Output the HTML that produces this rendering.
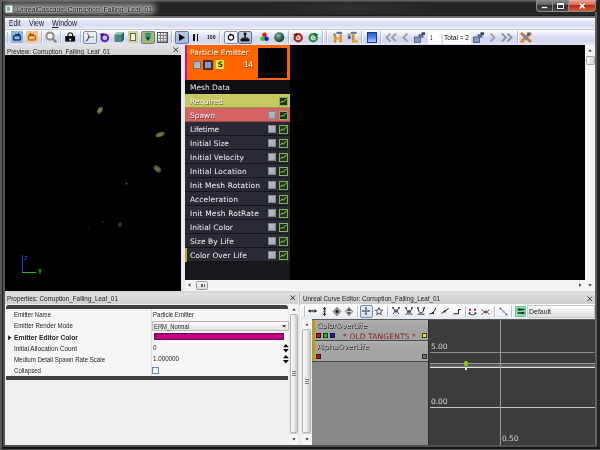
<!DOCTYPE html>
<html>
<head>
<meta charset="utf-8">
<title>UnrealCascade: Corruption_Falling_Leaf_01</title>
<style>
html,body{margin:0;padding:0;background:#2b2b2b;}
body{width:600px;height:450px;overflow:hidden;background:#2b2b2b;position:relative;font-family:"Liberation Sans",sans-serif;font-size:7px;color:#111;}
.a{position:absolute;box-sizing:border-box;}
.t{position:absolute;white-space:nowrap;line-height:1;transform-origin:0 0;}
svg{position:absolute;overflow:visible;}
</style>
</head>
<body>
<div id="app" style="position:absolute;left:0;top:0;width:600px;height:450px;filter:blur(0.35px);">
<div class="a" style="left:0px;top:0px;width:600px;height:450px;background:#222;"></div>
<div class="a" style="left:0px;top:0px;width:600px;height:17.8px;background:linear-gradient(#606060 0,#5a5a5a 7%,#262626 12%,#222222 50%,#282828 84%,#181818 87%,#707070 89%,#707070 100%);"></div>
<div class="a" style="left:2px;top:3px;width:154px;height:11px;background:rgba(200,200,200,.62);filter:blur(3px);border-radius:6px;"></div>
<div class="a" style="left:250px;top:1px;width:200px;height:14px;background:radial-gradient(ellipse at center,rgba(255,255,255,.07),rgba(255,255,255,0) 70%);"></div>
<div class="a" style="left:0px;top:0px;width:1.5px;height:450px;background:#595959;"></div>
<div class="a" style="left:1.5px;top:2px;width:1.6px;height:446px;background:#1e1e1e;"></div>
<div class="a" style="left:3.1px;top:15px;width:2.2px;height:432px;background:#545454;"></div>
<div class="a" style="left:595px;top:12px;width:2.2px;height:435px;background:#606060;"></div>
<div class="a" style="left:597.2px;top:0px;width:2.8px;height:450px;background:#242424;"></div>
<div class="a" style="left:3px;top:444.6px;width:594px;height:2.4px;background:#505050;"></div>
<div class="a" style="left:1.5px;top:447px;width:597px;height:1.6px;background:#141414;"></div>
<div class="a" style="left:0px;top:448.6px;width:600px;height:1.4px;background:#565656;"></div>
<div class="a" style="left:5px;top:5px;width:8px;height:7.5px;background:linear-gradient(135deg,#c8dcd4,#f4f8f6 60%,#e0ebe6);border:1px solid #9ab0a8;"></div>
<div class="a" style="left:6.5px;top:7px;width:3px;height:4px;background:#7fa89a;"></div>
<div class="t" style="left:17px;top:5.6px;font-size:8px;font-family:'Liberation Sans',sans-serif;color:#0a0a0a;transform:scaleX(0.853);text-shadow:0 0 2px #fff,0 0 3px #eee;">UnrealCascade: Corruption_Falling_Leaf_01</div>
<div class="a" style="left:536px;top:0px;width:60px;height:11.5px;background:#8c8c8c;border-radius:0 0 4px 4px;"></div>
<div class="a" style="left:537px;top:0px;width:15px;height:10.5px;background:linear-gradient(#8c8c8c,#5e5e5e 45%,#303030 50%,#484848);border-radius:0 0 0 3px;"></div>
<div class="a" style="left:553px;top:0px;width:15px;height:10.5px;background:linear-gradient(#8c8c8c,#5e5e5e 45%,#303030 50%,#484848);"></div>
<div class="a" style="left:569px;top:0px;width:26px;height:10.5px;background:linear-gradient(#e8a898,#d46a58 45%,#c02c12 50%,#d85a30);border-radius:0 0 3px 0;"></div>
<div class="a" style="left:541px;top:6px;width:7px;height:2.5px;background:#fff;border:0.5px solid #555;"></div>
<div class="a" style="left:556.5px;top:3px;width:7px;height:5.5px;border:1.5px solid #fff;border-top-width:2px;box-shadow:0 0 1px #222;"></div>
<svg style="left:579.3px;top:2.8px" width="6.4" height="5.8" viewBox="0 0 8 7"><path d="M1 0.5 L7 6.5 M7 0.5 L1 6.5" stroke="#3a1008" stroke-width="3.4" fill="none" opacity=".5"/><path d="M1 0.5 L7 6.5 M7 0.5 L1 6.5" stroke="#fff" stroke-width="2.1" fill="none"/></svg>
<div class="a" style="left:5.3px;top:17.8px;width:589.7px;height:426.8px;background:#f0f0f0;"></div>
<div class="a" style="left:5.3px;top:17.8px;width:589.7px;height:11.4px;background:linear-gradient(#ffffff 0,#fbfbff 10%,#e6e9f8 22%,#d9dcf2 55%,#dfe2f5 82%,#f2f2fb 100%);"></div>
<div class="a" style="left:5.3px;top:29px;width:589.7px;height:0.8px;background:#c6c6ce;"></div>
<div class="t" style="left:9px;top:19px;font-size:8.5px;font-family:'Liberation Sans',sans-serif;color:#1a1a2a;transform:scaleX(0.785);">Edit</div>
<div class="t" style="left:29px;top:19px;font-size:8.5px;font-family:'Liberation Sans',sans-serif;color:#1a1a2a;transform:scaleX(0.821);">View</div>
<div class="t" style="left:52px;top:19px;font-size:8.5px;font-family:'Liberation Sans',sans-serif;color:#1a1a2a;transform:scaleX(0.827);"><u>W</u>indow</div>
<div class="a" style="left:5.3px;top:29.8px;width:589.7px;height:15px;background:linear-gradient(#ffffff 0,#f6f7fd 12%,#e4e7f7 32%,#d7dbf0 52%,#d4d8ee 70%,#e2e5f6 100%);"></div>
<div class="a" style="left:6.5px;top:32px;width:1px;height:11px;background:#b8c0d4;"></div>
<div class="a" style="left:11px;top:30.5px;width:12px;height:12px;background:#8fb6dc;"></div>
<svg style="left:11px;top:30.5px" width="12" height="12" viewBox="0 0 12 12"><rect x="2.5" y="4.5" width="7" height="4.5" rx="1.8" fill="none" stroke="#143a78" stroke-width="1.6"/><path d="M4 3 L7 3 L7 1.5 L9.5 3.8 L7 5.5 L7 4.4 L4 4.4Z" fill="#143a78"/></svg>
<div class="a" style="left:26px;top:30.5px;width:12px;height:12px;background:#f0c890;"></div>
<svg style="left:26px;top:30.5px" width="12" height="12" viewBox="0 0 12 12"><rect x="2.5" y="4.5" width="7" height="4.5" rx="1.8" fill="none" stroke="#c86a10" stroke-width="1.6"/><path d="M8 3 L5 3 L5 1.5 L2.5 3.8 L5 5.5 L5 4.4 L8 4.4Z" fill="#a85008"/></svg>
<div class="a" style="left:41px;top:31px;width:1px;height:12px;background:#b0b9cf;"></div>
<div class="a" style="left:42px;top:31px;width:1px;height:12px;background:rgba(255,255,255,.8);"></div>
<svg style="left:45px;top:31px" width="12" height="12" viewBox="0 0 12 12"><circle cx="5" cy="5" r="3.6" fill="#f6f6f2" stroke="#8c8c84" stroke-width="2"/><path d="M8 8 L10.6 10.6" stroke="#84847c" stroke-width="2.4" stroke-linecap="round"/></svg>
<div class="a" style="left:60px;top:31px;width:1px;height:12px;background:#b0b9cf;"></div>
<div class="a" style="left:61px;top:31px;width:1px;height:12px;background:rgba(255,255,255,.8);"></div>
<svg style="left:65px;top:31px" width="12" height="12" viewBox="0 0 12 12"><path d="M3 5.2 V3.8 a2.3 2 0 0 1 4.6 0 V5.2" fill="none" stroke="#111" stroke-width="1.1"/><rect x="0.3" y="5" width="9.8" height="5.6" fill="#0a0a0a"/><rect x="4.3" y="7.6" width="1.8" height="1.8" fill="#f0f0f0"/></svg>
<div class="a" style="left:80px;top:31px;width:1px;height:12px;background:#b0b9cf;"></div>
<div class="a" style="left:81px;top:31px;width:1px;height:12px;background:rgba(255,255,255,.8);"></div>
<div class="a" style="left:82.5px;top:30.5px;width:14px;height:13.2px;background:linear-gradient(#f0f4fc,#d8e2f4);border:1px solid #7c8cb0;border-radius:2px;"></div>
<svg style="left:83.5px;top:32px" width="12" height="10.5" viewBox="0 0 12 10.5"><path d="M3 9 L5 5 L10 5" stroke="#3a8a3a" stroke-width="0.9" fill="none"/><path d="M5 5 L3.5 1" stroke="#c03030" stroke-width="0.9"/><path d="M5 5 L2 9.5" stroke="#3040c0" stroke-width="1"/><circle cx="5" cy="5" r="0.8" fill="#444"/></svg>
<svg style="left:99px;top:31px" width="11" height="12" viewBox="0 0 11 12"><circle cx="5.8" cy="6.8" r="3.3" fill="#d8d0f4" stroke="#5a28b8" stroke-width="2.2"/><path d="M0.5 3 L5 2 L3.5 6.2Z" fill="#3a1890"/></svg>
<svg style="left:113px;top:31px" width="12" height="12" viewBox="0 0 12 12"><path d="M1.5 3.5 L4 1.2 L11 1.2 L11 8.5 L8.5 11 L1.5 11Z" fill="#4e8880"/><path d="M1.5 3.5 L4 1.2 L11 1.2 L8.5 3.5Z" fill="#9cc8c0"/><path d="M8.5 3.5 L11 1.2 L11 8.5 L8.5 11Z" fill="#2e5c58"/></svg>
<div class="a" style="left:128px;top:31px;width:10px;height:12px;background:#d2d294;"></div>
<div class="a" style="left:129.8px;top:32.8px;width:6.4px;height:8.4px;background:#f4f4dc;border:1.3px solid #66664c;"></div>
<div class="a" style="left:141px;top:30.5px;width:14px;height:13px;background:#a4b47c;border:1px solid #6f8658;border-radius:1.5px;"></div>
<svg style="left:143px;top:32px" width="10" height="10" viewBox="0 0 10 10"><path d="M2.5 1 H7.5 V5.5 L5 9 L2.5 5.5Z" fill="#188068"/><path d="M3.2 5.8 L5 8.8 L6.8 5.8Z" fill="#0c2c28"/><rect x="3.2" y="1.8" width="3.6" height="2.6" fill="#30a888"/></svg>
<div class="a" style="left:157px;top:32px;width:10.5px;height:10.5px;background:#fafafa;border:1px solid #555;background-image:linear-gradient(90deg,transparent 0,transparent 2.2px,#777 2.2px,#777 2.9px,transparent 2.9px),linear-gradient(transparent 0,transparent 2.2px,#777 2.2px,#777 2.9px,transparent 2.9px);background-size:2.9px 2.9px;"></div>
<div class="a" style="left:171px;top:31px;width:1px;height:12px;background:#b0b9cf;"></div>
<div class="a" style="left:172px;top:31px;width:1px;height:12px;background:rgba(255,255,255,.8);"></div>
<div class="a" style="left:175px;top:30.5px;width:13.5px;height:13px;background:linear-gradient(#b4c8e4,#9fb8dc);border:1px solid #5c78a8;border-radius:1.5px;"></div>
<svg style="left:179px;top:33.5px" width="6" height="7" viewBox="0 0 6 7"><path d="M0 0 L6 3.5 L0 7Z" fill="#000"/></svg>
<div class="a" style="left:193.3px;top:33.5px;width:1.7px;height:7.5px;background:#111;"></div>
<div class="a" style="left:196.6px;top:33.5px;width:1.7px;height:7.5px;background:#111;"></div>
<div class="t" style="left:206.5px;top:35px;font-size:5px;font-family:'Liberation Sans',sans-serif;color:#111;transform:scaleX(1.019);font-weight:bold;">100</div>
<div class="a" style="left:219px;top:31px;width:1px;height:12px;background:#b0b9cf;"></div>
<div class="a" style="left:220px;top:31px;width:1px;height:12px;background:rgba(255,255,255,.8);"></div>
<div class="a" style="left:224px;top:30.5px;width:13.5px;height:13px;background:linear-gradient(#fbfcff,#e9eefa);border:1px solid #7f8fb0;border-radius:2px;"></div>
<svg style="left:226.5px;top:33px" width="8" height="8" viewBox="0 0 8 8"><circle cx="4" cy="4.4" r="2.7" fill="none" stroke="#111" stroke-width="1.3"/><path d="M3 0.2 L5.6 1.6 L3 3Z" fill="#111"/></svg>
<div class="a" style="left:237.5px;top:30.5px;width:14px;height:13px;background:linear-gradient(#c8d0e0,#b0bbd2);border:1px solid #5c6c90;border-radius:2px;"></div>
<svg style="left:240px;top:32px" width="10" height="10" viewBox="0 0 10 10"><rect x="0.5" y="6.5" width="9" height="3" rx="1" fill="#111"/><rect x="4.2" y="2" width="1.6" height="5" fill="#111"/><circle cx="5" cy="1.8" r="1.5" fill="#111"/><rect x="2" y="5.5" width="6" height="1.5" fill="#333"/></svg>
<svg style="left:260px;top:32px" width="9" height="10" viewBox="0 0 9 10"><circle cx="4.5" cy="2.8" r="2.3" fill="#e81818"/><circle cx="2.5" cy="6.8" r="2.3" fill="#18d818"/><circle cx="6.5" cy="6.8" r="2.3" fill="#1818e0"/></svg>
<svg style="left:273.5px;top:31.5px" width="10.5" height="10.5" viewBox="0 0 10.5 10.5"><defs><radialGradient id="sg" cx="40%" cy="35%" r="65%"><stop offset="0" stop-color="#8cc0b0"/><stop offset="0.5" stop-color="#3e7468"/><stop offset="1" stop-color="#183830"/></radialGradient></defs><circle cx="5.2" cy="5.2" r="5" fill="url(#sg)"/></svg>
<div class="a" style="left:288px;top:31px;width:1px;height:12px;background:#b0b9cf;"></div>
<div class="a" style="left:289px;top:31px;width:1px;height:12px;background:rgba(255,255,255,.8);"></div>
<svg style="left:293px;top:31.5px" width="10.5" height="11" viewBox="0 0 10.5 11"><circle cx="5.2" cy="5.8" r="3.6" fill="none" stroke="#a82818" stroke-width="2.2"/><path d="M0 2.5 L4.5 0.8 L3.6 5Z" fill="#7a1808"/><circle cx="5.2" cy="5.8" r="1.5" fill="#d88878"/></svg>
<svg style="left:308px;top:31.5px" width="10.5" height="11" viewBox="0 0 10.5 11"><circle cx="5.2" cy="5.8" r="3.6" fill="none" stroke="#2a9038" stroke-width="2.2"/><path d="M10.5 2.5 L6 0.8 L6.9 5Z" fill="#186020"/><circle cx="5.2" cy="5.8" r="1.5" fill="#8cd090"/></svg>
<div class="a" style="left:321.5px;top:31px;width:1px;height:12px;background:#b0b9cf;"></div>
<div class="a" style="left:322.5px;top:31px;width:1px;height:12px;background:rgba(255,255,255,.8);"></div>
<div class="a" style="left:326px;top:31px;width:1px;height:12px;background:#b0b9cf;"></div>
<div class="a" style="left:327px;top:31px;width:1px;height:12px;background:rgba(255,255,255,.8);"></div>
<svg style="left:331.5px;top:31px" width="11.5" height="12" viewBox="0 0 11.5 12"><rect x="2" y="3.5" width="2.3" height="8" fill="#d88818"/><rect x="7.5" y="3.5" width="2.3" height="8" fill="#d88818"/><rect x="2" y="6.5" width="7.8" height="2" fill="#e8a030"/><rect x="4.5" y="0.8" width="5.5" height="2.2" fill="#6c7888"/><rect x="1" y="2.5" width="3" height="2" fill="#8a94a4"/></svg>
<svg style="left:346.5px;top:31px" width="11.5" height="12" viewBox="0 0 11.5 12"><rect x="5" y="3.5" width="2.5" height="8" fill="#d88818"/><rect x="5" y="9.3" width="6" height="2.2" fill="#e8a030"/><rect x="4" y="0.8" width="5.5" height="2.2" fill="#6c7888"/><rect x="0.8" y="2.6" width="3.4" height="2.2" fill="#8a94a4"/><rect x="0.8" y="5" width="3" height="3" fill="#5068a8"/></svg>
<div class="a" style="left:361px;top:31px;width:1px;height:12px;background:#b0b9cf;"></div>
<div class="a" style="left:362px;top:31px;width:1px;height:12px;background:rgba(255,255,255,.8);"></div>
<div class="a" style="left:367px;top:32px;width:9.5px;height:10.5px;background:linear-gradient(#2a58d0 0,#4a80e8 45%,#a8c8f8 100%);border:1px solid #1c388c;"></div>
<div class="a" style="left:380px;top:31px;width:1px;height:12px;background:#b0b9cf;"></div>
<div class="a" style="left:381px;top:31px;width:1px;height:12px;background:rgba(255,255,255,.8);"></div>
<svg style="left:384.5px;top:32.5px" width="12" height="9" viewBox="0 0 12 9"><path d="M5.5 0.5 L1.5 4.5 L5.5 8.5 M11 0.5 L7 4.5 L11 8.5" stroke="#9ca1aa" stroke-width="1.9" fill="none"/></svg>
<svg style="left:401.5px;top:32.5px" width="7" height="9" viewBox="0 0 7 9"><path d="M5.5 0.5 L1.5 4.5 L5.5 8.5" stroke="#9ca1aa" stroke-width="1.9" fill="none"/></svg>
<svg style="left:414px;top:31.5px" width="11.5" height="11" viewBox="0 0 11.5 11"><rect x="0.5" y="5" width="6" height="5.5" fill="#7f98c0" stroke="#44587c" stroke-width="0.8"/><rect x="4.5" y="2.2" width="5" height="3.6" fill="#5c6c8c"/><rect x="7.5" y="0.3" width="3.6" height="2.6" fill="#38445c"/></svg>
<div class="a" style="left:427.5px;top:31.5px;width:13.5px;height:12px;background:#fff;"></div>
<div class="t" style="left:430px;top:33.5px;font-size:7px;font-family:'Liberation Sans',sans-serif;color:#000;transform:scaleX(0.640);">1</div>
<div class="a" style="left:442.5px;top:31.5px;width:28px;height:12px;background:#fff;"></div>
<div class="t" style="left:444px;top:33.5px;font-size:7px;font-family:'Liberation Sans',sans-serif;color:#000;transform:scaleX(0.937);">Total = 2</div>
<svg style="left:472.5px;top:31.5px" width="11.5" height="11" viewBox="0 0 11.5 11"><rect x="0.5" y="5" width="6" height="5.5" fill="#7f98c0" stroke="#44587c" stroke-width="0.8"/><rect x="4.5" y="2.2" width="5" height="3.6" fill="#5c6c8c"/><rect x="7.5" y="0.3" width="3.6" height="2.6" fill="#38445c"/></svg>
<svg style="left:488.5px;top:32.5px" width="7" height="9" viewBox="0 0 7 9"><path d="M1.5 0.5 L5.5 4.5 L1.5 8.5" stroke="#9ca1aa" stroke-width="1.9" fill="none"/></svg>
<svg style="left:501px;top:32.5px" width="12" height="9" viewBox="0 0 12 9"><path d="M1 0.5 L5 4.5 L1 8.5 M6.5 0.5 L10.5 4.5 L6.5 8.5" stroke="#8494ae" stroke-width="1.9" fill="none"/></svg>
<div class="a" style="left:516.5px;top:31px;width:1px;height:12px;background:#b0b9cf;"></div>
<div class="a" style="left:517.5px;top:31px;width:1px;height:12px;background:rgba(255,255,255,.8);"></div>
<svg style="left:520px;top:31.5px" width="12" height="11" viewBox="0 0 12 11"><path d="M1 1 L11 10 M11 1 L1 10" stroke="#d87818" stroke-width="3"/><rect x="3.5" y="3" width="4.5" height="4.5" fill="#7a8aa8"/><rect x="7" y="0.5" width="3" height="3" fill="#56627c"/><path d="M0.8 7 L4 7 L4 10.5 L0.8 10.5Z" fill="#e89028"/></svg>
<div class="a" style="left:5.3px;top:45px;width:176.7px;height:10px;background:linear-gradient(#e2e2e2,#d2d2d2);"></div>
<div class="t" style="left:7px;top:47.6px;font-size:7px;font-family:'Liberation Sans',sans-serif;color:#1a1a1a;transform:scaleX(0.894);">Preview: Corruption_Falling_Leaf_01</div>
<svg style="left:173px;top:47px" width="5.5" height="5.5" viewBox="0 0 5.5 5.5"><path d="M0.5 0.5 L5 5 M5 0.5 L0.5 5" stroke="#2a2a2a" stroke-width="0.95"/></svg>
<div class="a" style="left:5.3px;top:55px;width:175.7px;height:235.5px;background:#000;"></div>
<div class="a" style="left:181px;top:45px;width:3.5px;height:246px;background:#e9e9ed;"></div>
<div class="a" style="left:96px;top:108px;width:7.5px;height:5px;background:radial-gradient(ellipse at center,#8c8c58 0,#5c5c34 55%,rgba(0,0,0,0) 100%);border-radius:50%;transform:rotate(-55deg);opacity:1;"></div>
<div class="a" style="left:155px;top:132px;width:10px;height:5px;background:radial-gradient(ellipse at center,#84845a 0,#585834 55%,rgba(0,0,0,0) 100%);border-radius:50%;transform:rotate(-20deg);opacity:1;"></div>
<div class="a" style="left:153px;top:166px;width:9px;height:5.5px;background:radial-gradient(ellipse at center,#7c7c52 0,#505030 55%,rgba(0,0,0,0) 100%);border-radius:50%;transform:rotate(40deg);opacity:1;"></div>
<div class="a" style="left:124.5px;top:182px;width:3px;height:3px;background:radial-gradient(ellipse at center,#55553a 0,#2a2a1c 55%,rgba(0,0,0,0) 100%);border-radius:50%;transform:rotate(0deg);opacity:0.9;"></div>
<div class="a" style="left:117.5px;top:222px;width:3.5px;height:4.5px;background:radial-gradient(ellipse at center,#5a5a4a 0,#2c2c22 55%,rgba(0,0,0,0) 100%);border-radius:50%;transform:rotate(10deg);opacity:0.9;"></div>
<div class="a" style="left:102px;top:220.5px;width:2.5px;height:2.5px;background:radial-gradient(ellipse at center,#3a3a2c 0,#1c1c14 55%,rgba(0,0,0,0) 100%);border-radius:50%;transform:rotate(0deg);opacity:0.8;"></div>
<div class="a" style="left:88px;top:228px;width:2px;height:2px;background:radial-gradient(ellipse at center,#2c2c22 0,#141410 55%,rgba(0,0,0,0) 100%);border-radius:50%;transform:rotate(0deg);opacity:0.8;"></div>
<div class="a" style="left:101px;top:155px;width:2px;height:2px;background:radial-gradient(ellipse at center,#22221a 0,#101010 55%,rgba(0,0,0,0) 100%);border-radius:50%;transform:rotate(0deg);opacity:0.8;"></div>
<div class="a" style="left:21.5px;top:255px;width:1.5px;height:18px;background:#2038d8;"></div>
<div class="a" style="left:22px;top:272px;width:14px;height:1.3px;background:#20b820;"></div>
<div class="t" style="left:24px;top:254.5px;font-size:6px;font-family:'Liberation Sans',sans-serif;color:#2038d8;transform:scaleX(1.089);font-weight:bold;">Z</div>
<div class="t" style="left:38px;top:268.5px;font-size:6.5px;font-family:'Liberation Sans',sans-serif;color:#20c020;transform:scaleX(0.921);font-weight:bold;">Y</div>
<div class="a" style="left:184.5px;top:45px;width:400.5px;height:235px;background:#000;"></div>
<div class="a" style="left:184.5px;top:45px;width:105px;height:235px;background:#17171c;"></div>
<div class="a" style="left:184.5px;top:45px;width:105px;height:35px;background:#ff6600;"></div>
<div class="a" style="left:184.5px;top:45px;width:2.7px;height:35px;background:#c81088;"></div>
<div class="a" style="left:257.5px;top:48px;width:29.5px;height:29.5px;background:#000;"></div>
<div class="t" style="left:190px;top:49px;font-size:7.5px;font-family:'DejaVu Sans',sans-serif;color:#fff;letter-spacing:0.07px;text-shadow:0.5px 0.5px 0 rgba(120,40,0,.7);">Particle Emitter</div>
<div class="a" style="left:192.5px;top:60.5px;width:8px;height:8.5px;background:linear-gradient(135deg,#8fb0d0,#b8c4d0);border:1px solid #7a7068;"></div>
<div class="a" style="left:203.3px;top:60.2px;width:9.4px;height:9.4px;background:#7f9cc4;border:2px solid #4e2e1e;"></div>
<div class="a" style="left:214px;top:60.2px;width:2px;height:9.2px;background:#e89a10;"></div>
<div class="a" style="left:216px;top:60.2px;width:8.2px;height:9.2px;background:#f6e634;"></div>
<div class="t" style="left:217.8px;top:61.2px;font-size:7.5px;font-family:'DejaVu Sans',sans-serif;color:#2a2408;letter-spacing:-0.91px;font-weight:bold;">S</div>
<div class="t" style="left:244px;top:61.2px;font-size:7.5px;font-family:'DejaVu Sans',sans-serif;color:#fff;letter-spacing:-0.52px;text-shadow:0.5px 0.5px 0 rgba(120,40,0,.7);">14</div>
<div class="a" style="left:184.5px;top:80px;width:105px;height:14px;background:#0e0e13;"></div>
<div class="t" style="left:190px;top:83.5px;font-size:7.5px;font-family:'DejaVu Sans',sans-serif;color:#e6e6e6;letter-spacing:-0.01px;">Mesh Data</div>
<div class="a" style="left:184.5px;top:94px;width:105px;height:14px;background:#c8c860;border-bottom:1px solid rgba(0,0,0,.25);"></div>
<div class="t" style="left:190px;top:97.7px;font-size:7.5px;font-family:'DejaVu Sans',sans-serif;color:#f4f4f4;letter-spacing:-0.05px;text-shadow:0.6px 0.6px 0 rgba(0,0,0,.55);">Required</div>
<div class="a" style="left:278.7px;top:97px;width:9px;height:8.5px;background:#22301c;border:1px solid #7ab850;"></div>
<svg style="left:279.7px;top:98px" width="7" height="6.5" viewBox="0 0 7 6.5"><path d="M0.5 5 L2.2 3 L3.5 4.2 L6.3 0.8" stroke="#a8e070" stroke-width="0.9" fill="none"/></svg>
<div class="a" style="left:184.5px;top:108px;width:105px;height:14px;background:#d46464;border-bottom:1px solid rgba(0,0,0,.25);"></div>
<div class="t" style="left:190px;top:111.7px;font-size:7.5px;font-family:'DejaVu Sans',sans-serif;color:#f4f4f4;letter-spacing:-0.00px;text-shadow:0.6px 0.6px 0 rgba(0,0,0,.55);">Spawn</div>
<div class="a" style="left:267.5px;top:111.2px;width:8px;height:8px;background:linear-gradient(135deg,#b8c0c8,#a0a8b0);border:1px solid #80888f;"></div>
<div class="a" style="left:278.7px;top:111px;width:9px;height:8.5px;background:#22301c;border:1px solid #7ab850;"></div>
<svg style="left:279.7px;top:112px" width="7" height="6.5" viewBox="0 0 7 6.5"><path d="M0.5 5 L2.2 3 L3.5 4.2 L6.3 0.8" stroke="#a8e070" stroke-width="0.9" fill="none"/></svg>
<div class="a" style="left:184.5px;top:122px;width:105px;height:14px;background:#2a2a35;border-bottom:1px solid #15151a;"></div>
<div class="t" style="left:190px;top:125.7px;font-size:7.5px;font-family:'DejaVu Sans',sans-serif;color:#f4f4f4;letter-spacing:-0.18px;">Lifetime</div>
<div class="a" style="left:267.5px;top:125.2px;width:8px;height:8px;background:linear-gradient(135deg,#b8c0c8,#a0a8b0);border:1px solid #80888f;"></div>
<div class="a" style="left:278.7px;top:125px;width:9px;height:8.5px;background:#22301c;border:1px solid #7ab850;"></div>
<svg style="left:279.7px;top:126px" width="7" height="6.5" viewBox="0 0 7 6.5"><path d="M0.5 5 L2.2 3 L3.5 4.2 L6.3 0.8" stroke="#a8e070" stroke-width="0.9" fill="none"/></svg>
<div class="a" style="left:184.5px;top:136px;width:105px;height:14px;background:#2a2a35;border-bottom:1px solid #15151a;"></div>
<div class="t" style="left:190px;top:139.7px;font-size:7.5px;font-family:'DejaVu Sans',sans-serif;color:#f4f4f4;letter-spacing:0.04px;">Initial Size</div>
<div class="a" style="left:267.5px;top:139.2px;width:8px;height:8px;background:linear-gradient(135deg,#b8c0c8,#a0a8b0);border:1px solid #80888f;"></div>
<div class="a" style="left:278.7px;top:139px;width:9px;height:8.5px;background:#22301c;border:1px solid #7ab850;"></div>
<svg style="left:279.7px;top:140px" width="7" height="6.5" viewBox="0 0 7 6.5"><path d="M0.5 5 L2.2 3 L3.5 4.2 L6.3 0.8" stroke="#a8e070" stroke-width="0.9" fill="none"/></svg>
<div class="a" style="left:184.5px;top:150px;width:105px;height:14px;background:#2a2a35;border-bottom:1px solid #15151a;"></div>
<div class="t" style="left:190px;top:153.7px;font-size:7.5px;font-family:'DejaVu Sans',sans-serif;color:#f4f4f4;letter-spacing:0.09px;">Initial Velocity</div>
<div class="a" style="left:267.5px;top:153.2px;width:8px;height:8px;background:linear-gradient(135deg,#b8c0c8,#a0a8b0);border:1px solid #80888f;"></div>
<div class="a" style="left:278.7px;top:153px;width:9px;height:8.5px;background:#22301c;border:1px solid #7ab850;"></div>
<svg style="left:279.7px;top:154px" width="7" height="6.5" viewBox="0 0 7 6.5"><path d="M0.5 5 L2.2 3 L3.5 4.2 L6.3 0.8" stroke="#a8e070" stroke-width="0.9" fill="none"/></svg>
<div class="a" style="left:184.5px;top:164px;width:105px;height:14px;background:#2a2a35;border-bottom:1px solid #15151a;"></div>
<div class="t" style="left:190px;top:167.7px;font-size:7.5px;font-family:'DejaVu Sans',sans-serif;color:#f4f4f4;letter-spacing:0.13px;">Initial Location</div>
<div class="a" style="left:267.5px;top:167.2px;width:8px;height:8px;background:linear-gradient(135deg,#b8c0c8,#a0a8b0);border:1px solid #80888f;"></div>
<div class="a" style="left:278.7px;top:167px;width:9px;height:8.5px;background:#22301c;border:1px solid #7ab850;"></div>
<svg style="left:279.7px;top:168px" width="7" height="6.5" viewBox="0 0 7 6.5"><path d="M0.5 5 L2.2 3 L3.5 4.2 L6.3 0.8" stroke="#a8e070" stroke-width="0.9" fill="none"/></svg>
<div class="a" style="left:184.5px;top:178px;width:105px;height:14px;background:#2a2a35;border-bottom:1px solid #15151a;"></div>
<div class="t" style="left:190px;top:181.7px;font-size:7.5px;font-family:'DejaVu Sans',sans-serif;color:#f4f4f4;letter-spacing:0.12px;">Init Mesh Rotation</div>
<div class="a" style="left:267.5px;top:181.2px;width:8px;height:8px;background:linear-gradient(135deg,#b8c0c8,#a0a8b0);border:1px solid #80888f;"></div>
<div class="a" style="left:278.7px;top:181px;width:9px;height:8.5px;background:#22301c;border:1px solid #7ab850;"></div>
<svg style="left:279.7px;top:182px" width="7" height="6.5" viewBox="0 0 7 6.5"><path d="M0.5 5 L2.2 3 L3.5 4.2 L6.3 0.8" stroke="#a8e070" stroke-width="0.9" fill="none"/></svg>
<div class="a" style="left:184.5px;top:192px;width:105px;height:14px;background:#2a2a35;border-bottom:1px solid #15151a;"></div>
<div class="t" style="left:190px;top:195.7px;font-size:7.5px;font-family:'DejaVu Sans',sans-serif;color:#f4f4f4;letter-spacing:0.12px;">Acceleration</div>
<div class="a" style="left:267.5px;top:195.2px;width:8px;height:8px;background:linear-gradient(135deg,#b8c0c8,#a0a8b0);border:1px solid #80888f;"></div>
<div class="a" style="left:278.7px;top:195px;width:9px;height:8.5px;background:#22301c;border:1px solid #7ab850;"></div>
<svg style="left:279.7px;top:196px" width="7" height="6.5" viewBox="0 0 7 6.5"><path d="M0.5 5 L2.2 3 L3.5 4.2 L6.3 0.8" stroke="#a8e070" stroke-width="0.9" fill="none"/></svg>
<div class="a" style="left:184.5px;top:206px;width:105px;height:14px;background:#2a2a35;border-bottom:1px solid #15151a;"></div>
<div class="t" style="left:190px;top:209.7px;font-size:7.5px;font-family:'DejaVu Sans',sans-serif;color:#f4f4f4;letter-spacing:0.17px;">Init Mesh RotRate</div>
<div class="a" style="left:267.5px;top:209.2px;width:8px;height:8px;background:linear-gradient(135deg,#b8c0c8,#a0a8b0);border:1px solid #80888f;"></div>
<div class="a" style="left:278.7px;top:209px;width:9px;height:8.5px;background:#22301c;border:1px solid #7ab850;"></div>
<svg style="left:279.7px;top:210px" width="7" height="6.5" viewBox="0 0 7 6.5"><path d="M0.5 5 L2.2 3 L3.5 4.2 L6.3 0.8" stroke="#a8e070" stroke-width="0.9" fill="none"/></svg>
<div class="a" style="left:184.5px;top:220px;width:105px;height:14px;background:#2a2a35;border-bottom:1px solid #15151a;"></div>
<div class="t" style="left:190px;top:223.7px;font-size:7.5px;font-family:'DejaVu Sans',sans-serif;color:#f4f4f4;letter-spacing:0.02px;">Initial Color</div>
<div class="a" style="left:267.5px;top:223.2px;width:8px;height:8px;background:linear-gradient(135deg,#b8c0c8,#a0a8b0);border:1px solid #80888f;"></div>
<div class="a" style="left:278.7px;top:223px;width:9px;height:8.5px;background:#22301c;border:1px solid #7ab850;"></div>
<svg style="left:279.7px;top:224px" width="7" height="6.5" viewBox="0 0 7 6.5"><path d="M0.5 5 L2.2 3 L3.5 4.2 L6.3 0.8" stroke="#a8e070" stroke-width="0.9" fill="none"/></svg>
<div class="a" style="left:184.5px;top:234px;width:105px;height:14px;background:#2a2a35;border-bottom:1px solid #15151a;"></div>
<div class="t" style="left:190px;top:237.7px;font-size:7.5px;font-family:'DejaVu Sans',sans-serif;color:#f4f4f4;letter-spacing:0.06px;">Size By Life</div>
<div class="a" style="left:267.5px;top:237.2px;width:8px;height:8px;background:linear-gradient(135deg,#b8c0c8,#a0a8b0);border:1px solid #80888f;"></div>
<div class="a" style="left:278.7px;top:237px;width:9px;height:8.5px;background:#22301c;border:1px solid #7ab850;"></div>
<svg style="left:279.7px;top:238px" width="7" height="6.5" viewBox="0 0 7 6.5"><path d="M0.5 5 L2.2 3 L3.5 4.2 L6.3 0.8" stroke="#a8e070" stroke-width="0.9" fill="none"/></svg>
<div class="a" style="left:184.5px;top:248px;width:105px;height:14px;background:#2a2a35;border-bottom:1px solid #15151a;"></div>
<div class="t" style="left:190px;top:251.7px;font-size:7.5px;font-family:'DejaVu Sans',sans-serif;color:#f4f4f4;letter-spacing:0.07px;">Color Over Life</div>
<div class="a" style="left:267.5px;top:251.2px;width:8px;height:8px;background:linear-gradient(135deg,#b8c0c8,#a0a8b0);border:1px solid #80888f;"></div>
<div class="a" style="left:278.7px;top:251px;width:9px;height:8.5px;background:#22301c;border:1px solid #7ab850;"></div>
<svg style="left:279.7px;top:252px" width="7" height="6.5" viewBox="0 0 7 6.5"><path d="M0.5 5 L2.2 3 L3.5 4.2 L6.3 0.8" stroke="#a8e070" stroke-width="0.9" fill="none"/></svg>
<div class="a" style="left:184.5px;top:248px;width:2.7px;height:14px;background:#c0a820;"></div>
<div class="a" style="left:184.5px;top:280px;width:410.5px;height:10.5px;background:#f4f4f4;"></div>
<svg style="left:188px;top:283.3px" width="2.6" height="4.2" viewBox="0 0 2.6 4.2"><path d="M2.4 0.2 L0.2 2.1 L2.4 4Z" fill="#333"/></svg>
<div class="a" style="left:196px;top:281px;width:12px;height:8.5px;background:linear-gradient(#fafafa,#d8d8d8);border:1px solid #9a9a9a;border-radius:1.5px;"></div>
<div class="a" style="left:200.5px;top:283.5px;width:0.8px;height:3.5px;background:#666;"></div>
<div class="a" style="left:202px;top:283.5px;width:0.8px;height:3.5px;background:#666;"></div>
<div class="a" style="left:203.5px;top:283.5px;width:0.8px;height:3.5px;background:#666;"></div>
<svg style="left:579px;top:283.3px" width="2.6" height="4.2" viewBox="0 0 2.6 4.2"><path d="M0.2 0.2 L2.4 2.1 L0.2 4Z" fill="#333"/></svg>
<div class="a" style="left:585px;top:45px;width:10px;height:245.5px;background:#f4f4f4;"></div>
<svg style="left:588.2px;top:49.3px" width="4" height="2.6" viewBox="0 0 4 2.6"><path d="M0.2 2.4 L2 0.2 L3.8 2.4Z" fill="#333"/></svg>
<div class="a" style="left:586px;top:55.5px;width:8.5px;height:9px;background:linear-gradient(90deg,#f8f8f8,#d4d4d4);border:1px solid #a4a4a4;border-radius:1.5px;"></div>
<svg style="left:588px;top:284.2px" width="4" height="2.6" viewBox="0 0 4 2.6"><path d="M0.2 0.2 L2 2.4 L3.8 0.2Z" fill="#333"/></svg>
<div class="a" style="left:5.3px;top:290.5px;width:589.7px;height:2px;background:#d8d8d8;"></div>
<div class="a" style="left:5.3px;top:292.5px;width:293.2px;height:11.5px;background:linear-gradient(#e0e0e0,#d0d0d0);"></div>
<div class="t" style="left:7px;top:294.8px;font-size:7px;font-family:'Liberation Sans',sans-serif;color:#1a1a1a;transform:scaleX(0.908);">Properties: Corruption_Falling_Leaf_01</div>
<svg style="left:290px;top:294.5px" width="5.5" height="5.5" viewBox="0 0 5.5 5.5"><path d="M0.5 0.5 L5 5 M5 0.5 L0.5 5" stroke="#2a2a2a" stroke-width="0.95"/></svg>
<div class="a" style="left:5.3px;top:304px;width:293.2px;height:140.5px;background:#f0f0f0;"></div>
<div class="a" style="left:6px;top:304.8px;width:282px;height:4px;background:#404040;border-radius:3px 3px 0 0;"></div>
<div class="a" style="left:6px;top:375.5px;width:282px;height:4.2px;background:#404040;"></div>
<div class="a" style="left:6px;top:309px;width:282px;height:66.5px;background:#f6f6f6;"></div>
<div class="a" style="left:151px;top:309px;width:1px;height:66.5px;background:#dcdcdc;"></div>
<div class="t" style="left:14px;top:311.2px;font-size:7px;font-family:'Liberation Sans',sans-serif;color:#1c1c1c;transform:scaleX(0.865);">Emitter Name</div>
<div class="t" style="left:14px;top:322.35px;font-size:7px;font-family:'Liberation Sans',sans-serif;color:#1c1c1c;transform:scaleX(0.887);">Emitter Render Mode</div>
<div class="t" style="left:14px;top:333.5px;font-size:7px;font-family:'Liberation Sans',sans-serif;color:#1c1c1c;transform:scaleX(0.962);font-weight:bold;">Emitter Editor Color</div>
<div class="t" style="left:14px;top:344.65px;font-size:7px;font-family:'Liberation Sans',sans-serif;color:#1c1c1c;transform:scaleX(0.914);">Initial Allocation Count</div>
<div class="t" style="left:14px;top:355.8px;font-size:7px;font-family:'Liberation Sans',sans-serif;color:#1c1c1c;transform:scaleX(0.873);">Medium Detail Spawn Rate Scale</div>
<div class="t" style="left:14px;top:366.95px;font-size:7px;font-family:'Liberation Sans',sans-serif;color:#1c1c1c;transform:scaleX(0.867);">Collapsed</div>
<svg style="left:8px;top:335px" width="3.5" height="5.5" viewBox="0 0 3.5 5.5"><path d="M0.2 0.2 L3.3 2.7 L0.2 5.2Z" fill="#111"/></svg>
<div class="t" style="left:152.5px;top:310.6px;font-size:7px;font-family:'Liberation Sans',sans-serif;color:#1c1c1c;transform:scaleX(0.864);">Particle Emitter</div>
<div class="a" style="left:151.5px;top:320.7px;width:137px;height:10.2px;background:linear-gradient(#ffffff,#f0f0f0 50%,#e0e0e0);border:1px solid #bcbcbc;border-top-color:#cfa8a8;"></div>
<div class="t" style="left:153.5px;top:322.8px;font-size:7px;font-family:'Liberation Sans',sans-serif;color:#1c1c1c;transform:scaleX(0.833);">ERM_Normal</div>
<svg style="left:281.5px;top:325px" width="4.2" height="2.6" viewBox="0 0 4.2 2.6"><path d="M0.2 0.2 L4 0.2 L2.1 2.4Z" fill="#111"/></svg>
<div class="a" style="left:154px;top:333.3px;width:130px;height:7px;background:#c0007c;border:1px solid #6a1050;"></div>
<div class="t" style="left:152.5px;top:344px;font-size:7px;font-family:'Liberation Sans',sans-serif;color:#1c1c1c;transform:scaleX(0.896);">0</div>
<div class="t" style="left:152.5px;top:355px;font-size:7px;font-family:'Liberation Sans',sans-serif;color:#1c1c1c;transform:scaleX(0.890);">1.000000</div>
<svg style="left:282.8px;top:343.7px" width="5.8" height="8.8" viewBox="0 0 5.8 8.8"><path d="M0 3.2 L2.9 0 L5.8 3.2Z M0 5 L5.8 5 L2.9 8.6Z" fill="#0a0a0a"/></svg>
<svg style="left:282.8px;top:354.7px" width="5.8" height="8.8" viewBox="0 0 5.8 8.8"><path d="M0 3.2 L2.9 0 L5.8 3.2Z M0 5 L5.8 5 L2.9 8.6Z" fill="#0a0a0a"/></svg>
<div class="a" style="left:151.8px;top:366.5px;width:7.5px;height:7.5px;background:linear-gradient(135deg,#e8eef8,#ffffff);border:1px solid #6a84b0;"></div>
<div class="a" style="left:289.2px;top:304.5px;width:8.6px;height:140px;background:#ededed;"></div>
<div class="a" style="left:289.2px;top:304.5px;width:8.6px;height:9.5px;background:#f6f6f6;"></div>
<svg style="left:291.5px;top:308.1px" width="4" height="2.6" viewBox="0 0 4 2.6"><path d="M0.2 2.4 L2 0.2 L3.8 2.4Z" fill="#333"/></svg>
<div class="a" style="left:289.5px;top:314px;width:8px;height:119px;background:linear-gradient(90deg,#fbfbfb 0,#eeeeee 45%,#c9c9c9 100%);border:1px solid #b2b2b2;border-radius:1.5px;"></div>
<div class="a" style="left:289.2px;top:433px;width:8.6px;height:11.5px;background:#f6f6f6;border-top:1px solid #d0d0d0;"></div>
<svg style="left:291.5px;top:437.7px" width="4" height="2.6" viewBox="0 0 4 2.6"><path d="M0.2 0.2 L2 2.4 L3.8 0.2Z" fill="#333"/></svg>
<div class="a" style="left:291.5px;top:371.3px;width:4px;height:0.8px;background:#808080;"></div>
<div class="a" style="left:291.5px;top:373px;width:4px;height:0.8px;background:#808080;"></div>
<div class="a" style="left:291.5px;top:374.7px;width:4px;height:0.8px;background:#808080;"></div>
<div class="a" style="left:297.8px;top:292.5px;width:4px;height:152px;background:#e8e8e8;"></div>
<div class="a" style="left:299.3px;top:292.5px;width:1px;height:12px;background:#b4b4b4;"></div>
<div class="a" style="left:299.5px;top:304.5px;width:1px;height:140px;background:#f8f8f8;"></div>
<div class="a" style="left:301px;top:292.5px;width:294px;height:11.5px;background:linear-gradient(#dedede,#cdcdcd);"></div>
<div class="t" style="left:303px;top:294.8px;font-size:7px;font-family:'Liberation Sans',sans-serif;color:#1a1a1a;transform:scaleX(0.903);">Unreal Curve Editor: Corruption_Falling_Leaf_01</div>
<svg style="left:587px;top:295.5px" width="5.5" height="5.5" viewBox="0 0 5.5 5.5"><path d="M0.5 0.5 L5 5 M5 0.5 L0.5 5" stroke="#2a2a2a" stroke-width="0.95"/></svg>
<div class="a" style="left:301px;top:304px;width:294px;height:14.5px;background:linear-gradient(#ffffff,#f3f4f9 60%,#e6e8f1);"></div>
<div class="a" style="left:312px;top:318.5px;width:283px;height:1.1px;background:#5a5a5a;"></div>
<div class="a" style="left:303.5px;top:306px;width:1px;height:10.5px;background:#b8c0d0;"></div>
<svg style="left:308px;top:308px" width="9" height="6" viewBox="0 0 9 6"><path d="M0.5 3 L8.5 3" stroke="#222" stroke-width="1"/><path d="M0.3 3 L2.5 1 L2.5 5Z M8.7 3 L6.5 1 L6.5 5Z" fill="#222"/><rect x="3.5" y="1.8" width="2" height="2.4" fill="#666"/></svg>
<svg style="left:322px;top:306.5px" width="5" height="9" viewBox="0 0 5 9"><path d="M2.5 0.5 L2.5 8.5" stroke="#222" stroke-width="1"/><path d="M2.5 0 L0.5 2.2 L4.5 2.2Z M2.5 9 L0.5 6.8 L4.5 6.8Z" fill="#222"/><rect x="1.3" y="3.5" width="2.4" height="2" fill="#666"/></svg>
<svg style="left:333px;top:306.5px" width="8" height="9" viewBox="0 0 8 9"><path d="M4 0.3 L7.8 4.5 L4 8.7 L0.2 4.5Z" fill="#bbb" stroke="#333" stroke-width="0.7"/><path d="M4 2.2 L6 4.5 L4 6.8 L2 4.5Z" fill="#222"/></svg>
<svg style="left:345px;top:306.5px" width="8" height="9" viewBox="0 0 8 9"><path d="M4 0.3 L7.8 4.5 L4 8.7 L0.2 4.5Z" fill="#ccc" stroke="#555" stroke-width="0.7"/><path d="M4 1.5 L6 3.8 L2 3.8Z M4 7.5 L6 5.2 L2 5.2Z" fill="#333"/></svg>
<div class="a" style="left:356.5px;top:306px;width:1px;height:11px;background:#b4bcd0;"></div>
<div class="a" style="left:357.5px;top:306px;width:1px;height:11px;background:rgba(255,255,255,.8);"></div>
<div class="a" style="left:360px;top:305px;width:12.5px;height:12.5px;background:linear-gradient(#eef2fa,#d8e0f0);border:1px solid #6f86b8;border-radius:2px;"></div>
<svg style="left:362.3px;top:307.3px" width="8" height="8" viewBox="0 0 8 8"><path d="M4 0.3 L4 7.7 M0.3 4 L7.7 4" stroke="#3a4a6a" stroke-width="1"/><path d="M4 0 L2.8 1.5 L5.2 1.5Z M4 8 L2.8 6.5 L5.2 6.5Z M0 4 L1.5 2.8 L1.5 5.2Z M8 4 L6.5 2.8 L6.5 5.2Z" fill="#3a4a6a"/></svg>
<svg style="left:375px;top:307px" width="8" height="9" viewBox="0 0 8 9"><path d="M4 0.5 L5 3 L7.7 3.2 L5.6 5 L6.3 7.8 L4 6.2 L1.7 7.8 L2.4 5 L0.3 3.2 L3 3Z" fill="#e8e8e8" stroke="#333" stroke-width="0.8"/></svg>
<div class="a" style="left:386.5px;top:306px;width:1px;height:11px;background:#b4bcd0;"></div>
<div class="a" style="left:387.5px;top:306px;width:1px;height:11px;background:rgba(255,255,255,.8);"></div>
<svg style="left:392px;top:307px" width="8" height="8" viewBox="0 0 8 8"><path d="M1 0.8 L4 5.5 L7 0.8 M1 7.2 L4 2.5 L7 7.2" stroke="#26324e" stroke-width="0.9" fill="none"/><rect x="0.2" y="0" width="1.6" height="1.6" fill="#26324e"/><rect x="6.2" y="0" width="1.6" height="1.6" fill="#26324e"/></svg>
<svg style="left:404.5px;top:307px" width="8" height="8" viewBox="0 0 8 8"><path d="M1 0.8 L3 6 L4 3 L5 6 L7 0.8 M0.5 7 H7.5" stroke="#26324e" stroke-width="0.9" fill="none"/><rect x="0.2" y="0" width="1.6" height="1.6" fill="#26324e"/><rect x="6.2" y="0" width="1.6" height="1.6" fill="#26324e"/></svg>
<svg style="left:417px;top:307px" width="8" height="8" viewBox="0 0 8 8"><path d="M0.8 0.8 Q1.5 6 4 6 Q6.5 6 7.2 0.8 M0.5 7.2 H7.5" stroke="#26324e" stroke-width="1" fill="none"/><rect x="0" y="0" width="1.6" height="1.6" fill="#26324e"/><rect x="6.4" y="0" width="1.6" height="1.6" fill="#26324e"/></svg>
<svg style="left:428.5px;top:307px" width="8" height="8" viewBox="0 0 8 8"><path d="M0.3 7 L4 6 L6.8 0.8" stroke="#1a1a1a" stroke-width="1" fill="none"/><rect x="3.2" y="5" width="1.8" height="1.8" fill="#1a1a1a"/></svg>
<svg style="left:441px;top:307px" width="8" height="8" viewBox="0 0 8 8"><path d="M0.3 6.5 L3.5 4.3 L7.7 1.5" stroke="#1a1a1a" stroke-width="1" fill="none"/><rect x="2.8" y="3.6" width="1.8" height="1.8" fill="#1a1a1a"/></svg>
<svg style="left:453px;top:307px" width="8" height="8" viewBox="0 0 8 8"><path d="M0.5 6.8 L5.5 6.8 L5.5 2.5 L7.8 2.5" stroke="#1a1a1a" stroke-width="1" fill="none"/></svg>
<div class="a" style="left:464.5px;top:306px;width:1px;height:11px;background:#b4bcd0;"></div>
<div class="a" style="left:465.5px;top:306px;width:1px;height:11px;background:rgba(255,255,255,.8);"></div>
<svg style="left:468px;top:307.5px" width="9" height="8" viewBox="0 0 9 8"><rect x="1" y="0.8" width="2" height="2" fill="#c02020"/><rect x="6" y="0.8" width="2" height="2" fill="#c02020"/><path d="M0.5 5.5 Q4.5 8.5 8.5 5.5" stroke="#333" stroke-width="0.9" fill="none"/><rect x="0.8" y="4.2" width="1.6" height="1.6" fill="#333"/><rect x="6.6" y="4.2" width="1.6" height="1.6" fill="#333"/></svg>
<svg style="left:481px;top:307.5px" width="9" height="8" viewBox="0 0 9 8"><path d="M0.5 1.5 L4.5 5 L8.5 1.5 M0.5 6.5 L4.5 3 L8.5 6.5" stroke="#333" stroke-width="0.8" fill="none"/><rect x="3.6" y="3.1" width="1.8" height="1.8" fill="#c02020"/></svg>
<div class="a" style="left:494px;top:306px;width:1px;height:11px;background:#b4bcd0;"></div>
<div class="a" style="left:495px;top:306px;width:1px;height:11px;background:rgba(255,255,255,.8);"></div>
<svg style="left:499px;top:307px" width="9" height="9" viewBox="0 0 9 9"><path d="M1 1 L8 8" stroke="#7a86a0" stroke-width="1"/><rect x="0.5" y="0.5" width="2" height="2" fill="#6a7a9a"/><rect x="3.5" y="3.5" width="2" height="2" fill="#8a96b0"/><rect x="6.5" y="6.5" width="2" height="2" fill="#6a7a9a"/></svg>
<div class="a" style="left:510.5px;top:306px;width:1px;height:11px;background:#b4bcd0;"></div>
<div class="a" style="left:511.5px;top:306px;width:1px;height:11px;background:rgba(255,255,255,.8);"></div>
<div class="a" style="left:515px;top:305.8px;width:10.5px;height:11px;background:#8ce4b2;border:1px solid #6cc494;"></div>
<svg style="left:516.5px;top:307.5px" width="8" height="7" viewBox="0 0 8 7"><path d="M0.5 1.5 H7.5 M0.5 5 H7.5" stroke="#103020" stroke-width="1.3"/><rect x="1.5" y="0.3" width="2" height="2.4" fill="#103020"/><rect x="4.5" y="3.8" width="2" height="2.4" fill="#103020"/></svg>
<div class="a" style="left:526.5px;top:305px;width:68.5px;height:12.8px;background:linear-gradient(#fbfbfb,#ececec 55%,#dcdcdc);border:1px solid #c8c8c8;"></div>
<div class="t" style="left:528.5px;top:307.5px;font-size:7px;font-family:'Liberation Sans',sans-serif;color:#1a1a1a;transform:scaleX(0.992);">Default</div>
<div class="a" style="left:301.6px;top:319.5px;width:10px;height:125px;background:#ededed;"></div>
<div class="a" style="left:301.6px;top:319.5px;width:10px;height:9.5px;background:#f6f6f6;"></div>
<svg style="left:304.6px;top:323.1px" width="4" height="2.6" viewBox="0 0 4 2.6"><path d="M0.2 2.4 L2 0.2 L3.8 2.4Z" fill="#b03030"/></svg>
<div class="a" style="left:301.9px;top:329px;width:9.4px;height:104px;background:linear-gradient(90deg,#fbfbfb 0,#eeeeee 45%,#c9c9c9 100%);border:1px solid #b2b2b2;border-radius:1.5px;"></div>
<div class="a" style="left:301.6px;top:433px;width:10px;height:11.5px;background:#f6f6f6;border-top:1px solid #d0d0d0;"></div>
<svg style="left:304.6px;top:437.7px" width="4" height="2.6" viewBox="0 0 4 2.6"><path d="M0.2 0.2 L2 2.4 L3.8 0.2Z" fill="#333"/></svg>
<div class="a" style="left:304.6px;top:379.3px;width:4px;height:0.8px;background:#808080;"></div>
<div class="a" style="left:304.6px;top:381px;width:4px;height:0.8px;background:#808080;"></div>
<div class="a" style="left:304.6px;top:382.7px;width:4px;height:0.8px;background:#808080;"></div>
<div class="a" style="left:312px;top:319.5px;width:117px;height:125px;background:#888888;"></div>
<div class="a" style="left:312px;top:319.5px;width:117px;height:20.7px;background:linear-gradient(#b0b0b0 0,#a6a6a6 25%,#a4a4a4 100%);"></div>
<div class="a" style="left:312px;top:340.2px;width:117px;height:1px;background:#4a4a4a;"></div>
<div class="a" style="left:312px;top:341.2px;width:117px;height:19.8px;background:linear-gradient(#b0b0b0 0,#a6a6a6 25%,#a4a4a4 100%);"></div>
<div class="a" style="left:312px;top:361px;width:117px;height:1px;background:#4a4a4a;"></div>
<div class="a" style="left:312px;top:319.5px;width:2.7px;height:41.5px;background:#b89c18;"></div>
<div class="t" style="left:317px;top:322.2px;font-size:7.5px;font-family:'DejaVu Sans',sans-serif;color:#dcdcdc;letter-spacing:-0.09px;text-shadow:0.7px 0.7px 0 #1a1a1a,-0.3px -0.3px 0 #444;">ColorOverLife</div>
<div class="t" style="left:317px;top:343.2px;font-size:7.5px;font-family:'DejaVu Sans',sans-serif;color:#dcdcdc;letter-spacing:-0.07px;text-shadow:0.7px 0.7px 0 #1a1a1a,-0.3px -0.3px 0 #444;">AlphaOverLife</div>
<div class="a" style="left:316px;top:333.3px;width:5.2px;height:5.2px;background:#c81414;border:0.8px solid #3a1010;"></div>
<div class="a" style="left:323px;top:333.3px;width:5.2px;height:5.2px;background:#1cc01c;border:0.8px solid #103a10;"></div>
<div class="a" style="left:330px;top:333.3px;width:5.2px;height:5.2px;background:#1414c0;border:0.8px solid #10103a;"></div>
<div class="a" style="left:316px;top:354.3px;width:5.2px;height:5.2px;background:#c81414;border:0.8px solid #3a1010;"></div>
<div class="t" style="left:343px;top:332.5px;font-size:7.5px;font-family:'DejaVu Sans',sans-serif;color:#8a1c1c;letter-spacing:0.14px;">* OLD TANGENTS *</div>
<div class="a" style="left:422px;top:333.3px;width:5.2px;height:5.2px;background:#f0e418;border:0.8px solid #3a3a10;"></div>
<div class="a" style="left:422px;top:354px;width:5.2px;height:5.2px;background:#727272;border:0.8px solid #2a2a2a;"></div>
<div class="a" style="left:429px;top:319.5px;width:166px;height:125px;background:#3c3c3c;"></div>
<div class="a" style="left:428.3px;top:319.5px;width:1.2px;height:125px;background:#2a2a2a;"></div>
<div class="a" style="left:429.5px;top:352.2px;width:165.5px;height:1px;background:#8c8c8c;"></div>
<div class="a" style="left:429.5px;top:362.5px;width:165.5px;height:1.2px;background:#9c9c9c;"></div>
<div class="a" style="left:429.5px;top:363.7px;width:165.5px;height:3.1px;background:linear-gradient(#484848,#787878);"></div>
<div class="a" style="left:429.5px;top:366.8px;width:165.5px;height:1.6px;background:#e4e4e4;"></div>
<div class="a" style="left:429.5px;top:406.6px;width:165.5px;height:1px;background:#c4c4c4;"></div>
<div class="a" style="left:500.3px;top:319.5px;width:1px;height:125px;background:#9a9a9a;"></div>
<div class="t" style="left:431px;top:342.8px;font-size:7.5px;font-family:'DejaVu Sans',sans-serif;color:#d8d8d8;letter-spacing:-0.05px;">5.00</div>
<div class="t" style="left:431px;top:398.3px;font-size:7.5px;font-family:'DejaVu Sans',sans-serif;color:#d8d8d8;letter-spacing:-0.05px;">0.00</div>
<div class="t" style="left:502px;top:435.3px;font-size:7.5px;font-family:'DejaVu Sans',sans-serif;color:#d8d8d8;letter-spacing:-0.05px;">0.50</div>
<div class="a" style="left:463.7px;top:361.3px;width:4.5px;height:4.7px;background:#94c414;border-radius:1.5px;"></div>
<div class="a" style="left:464.5px;top:367px;width:2.7px;height:3px;background:#e8d8c8;"></div>
</div>
</body>
</html>
